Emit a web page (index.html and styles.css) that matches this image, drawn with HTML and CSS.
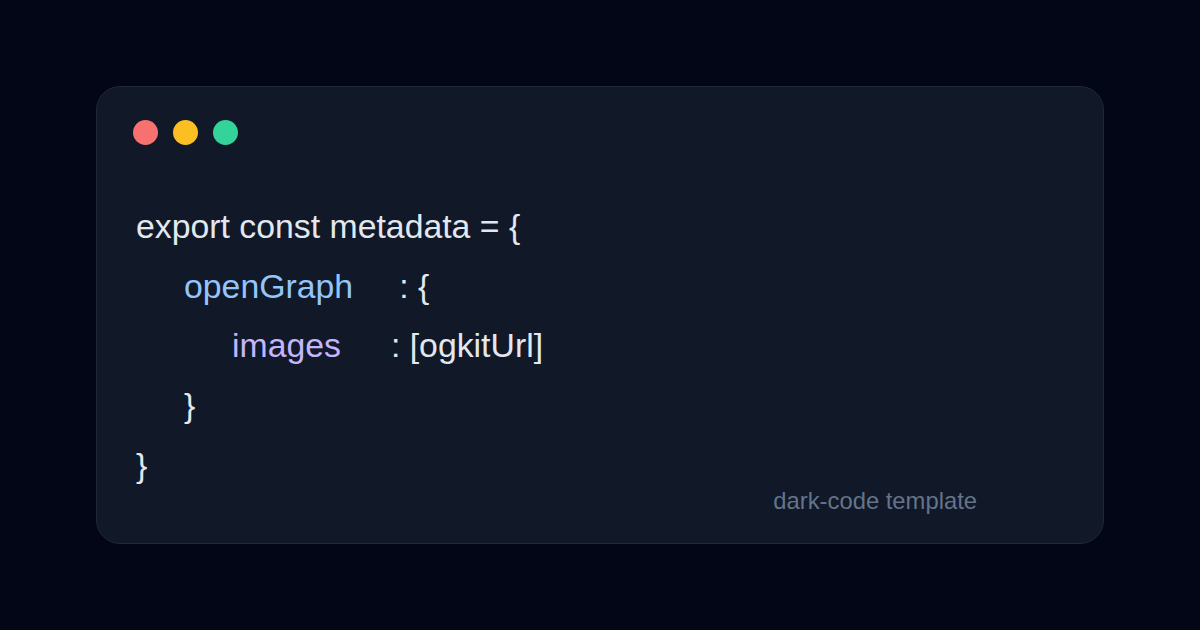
FILE: index.html
```html
<!DOCTYPE html>
<html>
<head>
<meta charset="utf-8">
<link rel="stylesheet" href="styles.css">
</head>
<body>
<div class="card">
  <div class="dots">
    <span class="dot red"></span>
    <span class="dot yellow"></span>
    <span class="dot green"></span>
  </div>
  <div class="body">
    <div class="code">
      <div class="line">export const metadata = {</div>
      <div class="line ind1"><span class="blue">openGraph</span><span class="gap1">: {</span></div>
      <div class="line ind2"><span class="violet">images</span><span class="gap2">: [ogkitUrl]</span></div>
      <div class="line ind1">}</div>
      <div class="line">}</div>
    </div>
    <div class="footer">dark-code template</div>
  </div>
</div>
</body>
</html>
```

FILE: styles.css
```css
html, body {
  margin: 0;
  padding: 0;
}
body {
  width: 1200px;
  height: 630px;
  background: #020617;
  display: flex;
  align-items: center;
  justify-content: center;
  font-family: "Liberation Sans", Arial, sans-serif;
}
.card {
  box-sizing: border-box;
  width: 1008px;
  height: 458px;
  background: #111827;
  border: 1px solid #1e293b;
  border-radius: 24px;
  padding: 33px 40px 0 36px;
  display: flex;
  flex-direction: column;
}
.dots {
  display: flex;
  gap: 15px;
}
.dot {
  width: 25px;
  height: 25px;
  border-radius: 50%;
}
.red { background: #f87171; }
.yellow { background: #fbbf24; }
.green { background: #34d399; }
.body {
  display: flex;
  justify-content: space-between;
  align-items: flex-end;
  margin-top: 52px;
  padding-left: 3px;
  padding-right: 86px;
}
.code {
  color: #e2e8f0;
  font-size: 33.8px;
  line-height: 59.7px;
  white-space: nowrap;
}
.ind1 { padding-left: 48px; }
.ind2 { padding-left: 96px; }
.blue { color: #93c5fd; }
.violet { color: #c4b5fd; }
.gap1 { margin-left: 46px; }
.gap2 { margin-left: 50px; }
.footer {
  color: #64748b;
  font-size: 23.8px;
  line-height: 28px;
  margin-bottom: -19px;
}
```
